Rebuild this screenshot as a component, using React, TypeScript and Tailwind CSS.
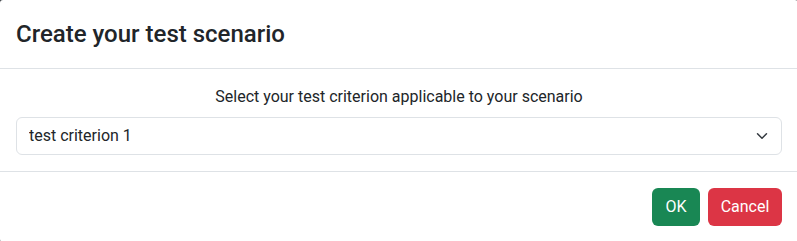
import { useState } from "react";

const options = ["test criterion 1", "test criterion 2", "test criterion 3"];

export default function App() {
  const [criterion, setCriterion] = useState(options[0]);

  return (
    <div className="h-[241px] w-[797px] overflow-hidden bg-[#3a3f44]">
      <div
        className="flex h-[242px] w-[798px] flex-col rounded-[3px] bg-white text-[#212529]"
        style={{ fontFamily: 'Roboto, "Noto Sans", sans-serif' }}
      >
        {/* Header */}
        <div className="flex h-[69px] shrink-0 items-center border-b border-[#dee2e6] px-4">
          <h4 className="text-[24px] font-medium leading-[36px]">Create your test scenario</h4>
        </div>

        {/* Body */}
        <div className="p-4">
          <p className="mb-2 text-center text-[16px] leading-6">
            Select your test criterion applicable to your scenario
          </p>
          <div className="relative">
            <select
              value={criterion}
              onChange={(e) => setCriterion(e.target.value)}
              className="block h-[38px] w-full appearance-none rounded-[6px] border border-[#dee2e6] bg-white pl-3 pr-9 text-[16px] leading-6 text-[#212529] outline-none"
              style={{ fontFamily: "inherit" }}
            >
              {options.map((o) => (
                <option key={o}>{o}</option>
              ))}
            </select>
            <svg
              className="pointer-events-none absolute right-3 top-1/2 h-3 w-4 -translate-y-1/2"
              viewBox="0 0 16 16"
              fill="none"
              stroke="#343a40"
              strokeWidth="2"
              strokeLinecap="round"
              strokeLinejoin="round"
            >
              <path d="m2 5 6 6 6-6" />
            </svg>
          </div>
        </div>

        {/* Footer */}
        <div className="flex items-center justify-end gap-2 border-t border-[#dee2e6] px-4 py-4">
          <button className="flex h-[38px] w-[48px] items-center justify-center rounded-[6px] bg-[#198754] text-[16px] text-white">
            OK
          </button>
          <button className="flex h-[38px] w-[74px] items-center justify-center rounded-[6px] bg-[#dc3545] text-[16px] text-white">
            Cancel
          </button>
        </div>
      </div>
    </div>
  );
}
